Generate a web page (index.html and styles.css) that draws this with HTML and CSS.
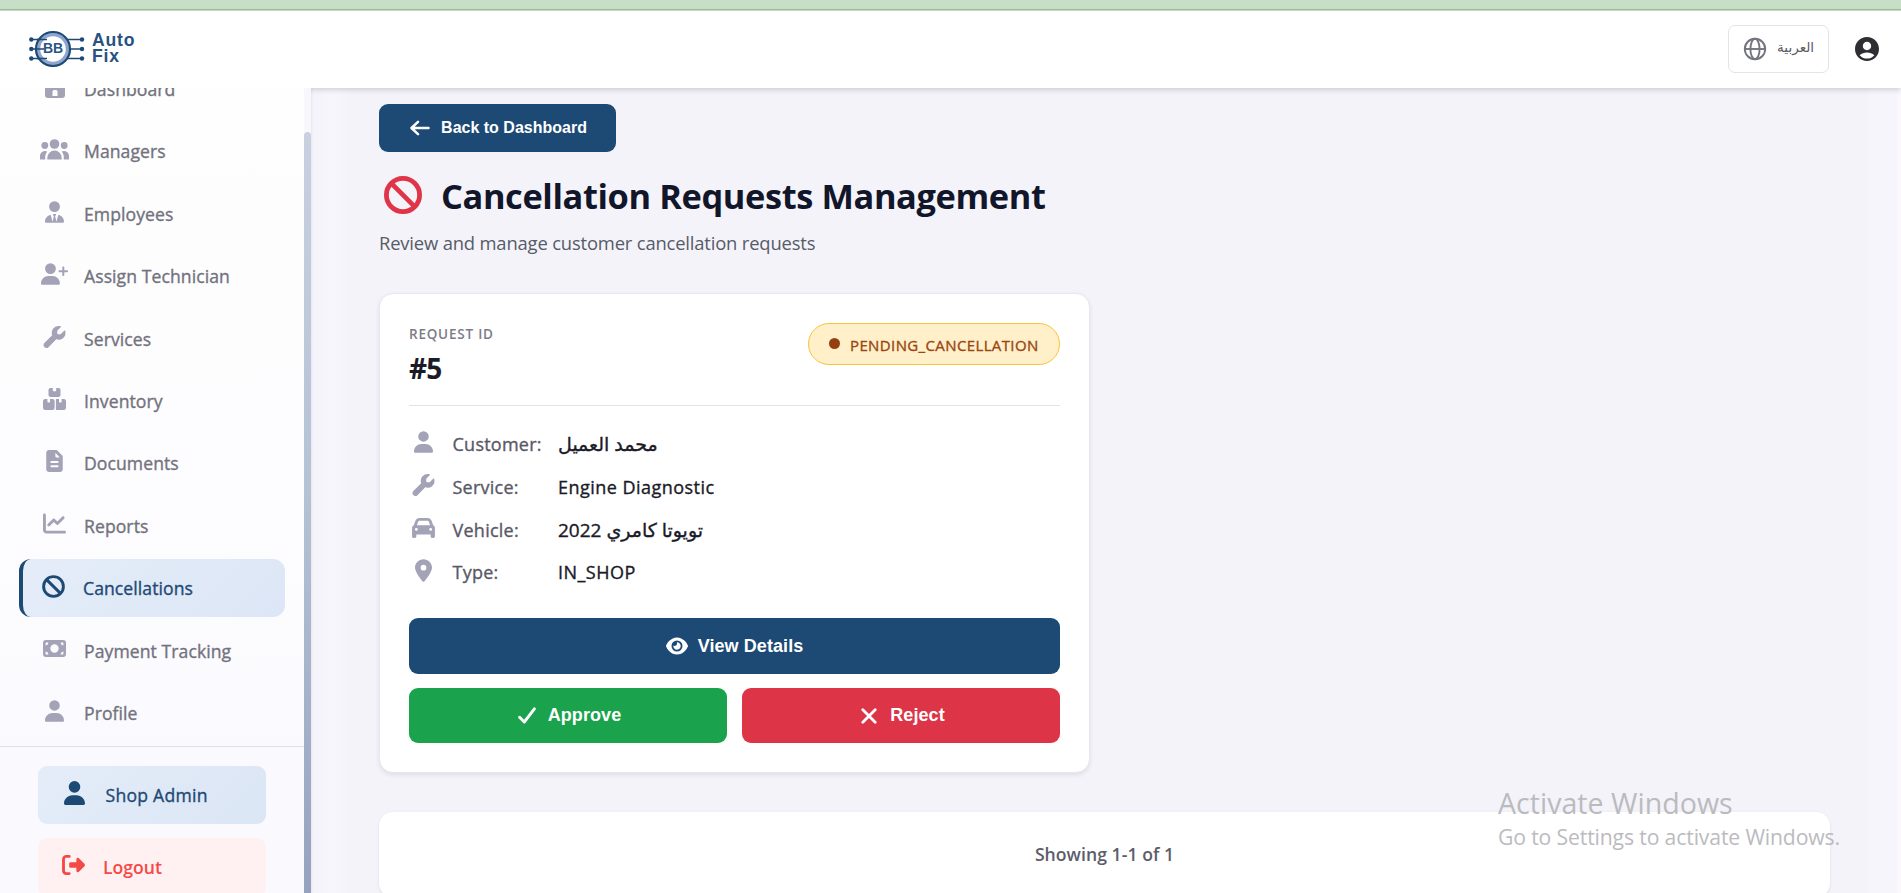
FILE: index.html
```html
<!DOCTYPE html>
<html lang="en">
<head>
<meta charset="utf-8">
<title>Cancellation Requests Management</title>
<link rel="stylesheet" href="styles.css">
</head>
<body>
<div class="strip"></div>
<header class="topbar">
  <div class="brand">
    <svg class="brand-mark" viewBox="0 0 56 38" width="56" height="38">
      <g stroke="#1d4975" stroke-width="1.7" fill="#1d4975">
        <path d="M2 9.500H11M2 19H14M2 28.500H11M38 9.500H53M42 19H53M38 28.500H53"/>
        <g stroke="none"><circle cx="2.300" cy="9.500" r="2.200"/><circle cx="2.300" cy="19" r="2.200"/><circle cx="2.300" cy="28.500" r="2.200"/><circle cx="53" cy="9.500" r="2.200"/><circle cx="53" cy="19" r="2.200"/><circle cx="53" cy="28.500" r="2.200"/></g>
      </g>
      <circle cx="24" cy="19" r="14.500" fill="#fff" stroke="#8ea6cf" stroke-width="3.400"/>
      <circle cx="24" cy="19" r="17" fill="none" stroke="#1d4975" stroke-width="2.200"/>
      <path d="M6 19H15M8 9.500H18M8 28.500H18" stroke="#1d4975" stroke-width="1.500"/>
      <text x="24" y="23.200" class="brand-bb" text-anchor="middle">BB</text>
    </svg>
    <div class="brand-name"><span>Auto</span><span>Fix</span></div>
  </div>
  <div class="top-actions">
    <div class="lang">
      <svg viewBox="0 0 24 24" width="24" height="24" fill="none" stroke="#74747f" stroke-width="1.900"><circle cx="12" cy="12" r="10.200"/><ellipse cx="12" cy="12" rx="4.600" ry="10.200"/><path d="M1.800 12H22.200"/></svg>
      <span lang="ar" dir="rtl">العربية</span>
    </div>
    <svg viewBox="2 2 20 20" width="24" height="24" fill="#2e2e33"><path d="M12 2C6.480 2 2 6.480 2 12s4.480 10 10 10 10-4.480 10-10S17.520 2 12 2zm0 4c1.930 0 3.500 1.570 3.500 3.500S13.930 13 12 13s-3.500-1.570-3.500-3.500S10.070 6 12 6zm0 14c-2.030 0-4.430-.820-6.140-2.880C7.550 15.800 9.680 15 12 15s4.450.800 6.140 2.120C16.430 19.180 14.030 20 12 20z"/></svg>
  </div>
</header>
<div class="shell">
  <aside class="sidebar">
    <div class="side-scroll">
      <nav class="nav">
        <a class="item"><span class="ico"><svg viewBox="0 0 20 22" width="20" height="22"><path fill-rule="evenodd" d="M10 0L20 8V19a3 3 0 0 1-3 3H3a3 3 0 0 1-3-3V8zM7.500 20h5v-4.500a1.500 1.500 0 0 0-1.500-1.500h-2a1.500 1.500 0 0 0-1.500 1.500z"/></svg></span>Dashboard</a>
        <a class="item"><span class="ico"><svg viewBox="0 0 29 21" width="29" height="21"><circle cx="14.500" cy="5" r="4.800"/><circle cx="4.800" cy="6.500" r="3.400"/><circle cx="24.200" cy="6.500" r="3.400"/><path d="M7.300 20.600v-1.800a7.200 7.200 0 0 1 14.400 0v1.800zM0 20.600V17a5 5 0 0 1 7.300-4.400A10 10 0 0 0 5.300 20.600zM29 20.600V17a5 5 0 0 0-7.300-4.400A10 10 0 0 1 23.700 20.600z"/></svg></span>Managers</a>
        <a class="item"><span class="ico"><svg viewBox="0 0 448 512" width="19" height="22"><path d="M96 128a128 128 0 1 0 256 0A128 128 0 1 0 96 128zm94.500 200.200l18.600 31L175.800 483.100l-36-146.900c-2-8.100-9.800-13.400-17.900-11.300C51.900 342.400 0 405.800 0 481.300c0 17 13.800 30.700 30.700 30.700H162.500H417.300c17 0 30.700-13.800 30.700-30.700c0-75.500-51.900-138.900-121.900-156.400c-8.100-2-15.900 3.300-17.900 11.300l-36 146.900L238.900 359.200l18.600-31c6.400-10.700-1.300-24.200-13.700-24.200H204.300c-12.400 0-20.100 13.600-13.700 24.200z"/></svg></span>Employees</a>
        <a class="item"><span class="ico"><svg viewBox="0 0 640 512" width="27" height="22"><path d="M96 128a128 128 0 1 1 256 0A128 128 0 1 1 96 128zM0 482.300C0 383.800 79.800 304 178.300 304h91.400C368.200 304 448 383.800 448 482.300c0 16.400-13.300 29.700-29.700 29.700H29.700C13.300 512 0 498.700 0 482.300zM504 278V214H440c-13.300 0-24-10.700-24-24s10.700-24 24-24h64V102c0-13.300 10.700-24 24-24s24 10.700 24 24v64h64c13.300 0 24 10.700 24 24s-10.700 24-24 24H552v64c0 13.300-10.700 24-24 24s-24-10.700-24-24z"/></svg></span>Assign Technician</a>
        <a class="item"><span class="ico"><svg viewBox="0 0 512 512" width="23" height="22"><path d="M352 320c88.400 0 160-71.600 160-160c0-15.300-2.200-30.100-6.200-44.200c-3.100-10.800-16.400-13.200-24.300-5.300l-76.800 76.800c-3 3-7.100 4.700-11.300 4.700H336c-8.800 0-16-7.200-16-16V118.600c0-4.200 1.700-8.300 4.700-11.300l76.800-76.800c7.900-7.900 5.400-21.200-5.300-24.300C382.100 2.200 367.300 0 352 0C263.600 0 192 71.600 192 160c0 19.100 3.400 37.500 9.500 54.500L19.900 396.100C7.200 408.800 0 426.100 0 444.100C0 481.600 30.400 512 67.900 512c18 0 35.300-7.200 48-19.900L297.500 310.500c17 6.200 35.400 9.500 54.500 9.500z"/></svg></span>Services</a>
        <a class="item"><span class="ico"><svg viewBox="0 0 23 22" width="23" height="22"><path d="M7.500 0H9.800V2.600a.6.600 0 0 0 .6.600H12.600a.6.600 0 0 0 .6-.6V0H15.500a2 2 0 0 1 2 2V7a2 2 0 0 1-2 2H7.500a2 2 0 0 1-2-2V2a2 2 0 0 1 2-2zM2.200 11H4.400V13.800a.7.700 0 0 0 .7.700H6.300a.7.700 0 0 0 .7-.7V11H9.600a2 2 0 0 1 2 2V20a2 2 0 0 1-2 2H2.200a2.200 2.200 0 0 1-2.200-2.200V13.200A2.200 2.200 0 0 1 2.200 11zM12.900 11H16V13.800a.7.700 0 0 0 .7.700H17.900a.7.700 0 0 0 .7-.7V11H20.800A2.200 2.200 0 0 1 23 13.200V19.800A2.200 2.200 0 0 1 20.800 22H12.900z"/></svg></span>Inventory</a>
        <a class="item"><span class="ico"><svg viewBox="0 0 384 512" width="17" height="22"><path fill-rule="evenodd" d="M64 0C28.700 0 0 28.700 0 64V448c0 35.300 28.700 64 64 64H320c35.300 0 64-28.700 64-64V140L244 0zM212 65L315 172H236c-13 0-24-11-24-24zM120 256H264a24 24 0 0 1 0 48H120a24 24 0 0 1 0-48zm0 96H264a24 24 0 0 1 0 48H120a24 24 0 0 1 0-48z"/></svg></span>Documents</a>
        <a class="item"><span class="ico"><svg viewBox="0 0 512 512" width="23" height="23"><path d="M64 64c0-17.700-14.300-32-32-32S0 46.300 0 64V400c0 44.200 35.800 80 80 80H480c17.700 0 32-14.300 32-32s-14.300-32-32-32H80c-8.800 0-16-7.200-16-16V64zm406.600 86.600c12.500-12.500 12.500-32.800 0-45.300s-32.800-12.500-45.300 0L320 210.700l-57.400-57.400c-12.500-12.500-32.800-12.500-45.300 0l-112 112c-12.500 12.500-12.500 32.800 0 45.300s32.800 12.500 45.300 0L240 221.300l57.400 57.400c12.500 12.500 32.800 12.500 45.300 0l128-128z"/></svg></span>Reports</a>
        <a class="item active"><span class="ico"><svg viewBox="0 0 23 23" width="23" height="23" fill="none" stroke="#1d4975" stroke-width="2.900"><circle cx="11.500" cy="11.500" r="9.900"/><path d="M4.600 4.600L18.400 18.400"/></svg></span>Cancellations</a>
        <a class="item"><span class="ico"><svg viewBox="0 0 23 17" width="23" height="17"><path fill-rule="evenodd" d="M3 0H20a3 3 0 0 1 3 3V14a3 3 0 0 1-3 3H3a3 3 0 0 1-3-3V3a3 3 0 0 1 3-3zM11.500 4.300a4.200 4.200 0 1 0 0 8.400 4.200 4.200 0 0 0 0-8.400zM2.600 3.100V5.600A3 3 0 0 0 5.400 3.100a.5.500 0 0 0-.5-.5H3.100a.5.500 0 0 0-.5.5zM20.400 3.100V5.600A3 3 0 0 1 17.600 3.100a.5.500 0 0 1 .5-.5H19.900a.5.500 0 0 1 .5.500zM2.600 13.900V11.400A3 3 0 0 1 5.400 13.900a.5.500 0 0 1-.5.500H3.100a.5.500 0 0 1-.5-.5zM20.400 13.900V11.400A3 3 0 0 0 17.600 13.900a.5.500 0 0 0 .5.500H19.900a.5.500 0 0 0 .5-.5z"/></svg></span>Payment Tracking</a>
        <a class="item"><span class="ico"><svg viewBox="0 0 448 512" width="19" height="22"><path d="M224 248A124 124 0 1 0 224 0a124 124 0 1 0 0 248zM178.300 304C79.800 304 0 383.800 0 482.300C0 498.700 13.300 512 29.700 512H418.300c16.400 0 29.700-13.300 29.700-29.700C448 383.800 368.200 304 269.700 304z"/></svg></span>Profile</a>
      </nav>
      <div class="side-foot">
        <a class="foot-btn admin"><span class="ico"><svg viewBox="0 0 448 512" width="21" height="24"><path d="M224 248A124 124 0 1 0 224 0a124 124 0 1 0 0 248zM178.300 304C79.800 304 0 383.800 0 482.300C0 498.700 13.300 512 29.700 512H418.300c16.400 0 29.700-13.300 29.700-29.700C448 383.800 368.200 304 269.700 304z"/></svg></span>Shop Admin</a>
        <a class="foot-btn logout"><span class="ico"><svg viewBox="0 0 512 448" width="23" height="20"><path d="M377.900 73.900L500.700 196.700c7.200 7.200 11.300 17.100 11.300 27.300s-4.100 20.100-11.300 27.300L377.900 374.100c-6.400 6.400-15 9.900-24 9.900c-18.700 0-33.900-15.200-33.900-33.900l0-62.100-128 0c-17.700 0-32-14.300-32-32l0-64c0-17.700 14.300-32 32-32l128 0 0-62.100c0-18.700 15.200-33.900 33.900-33.900c9 0 17.600 3.600 24 9.900zM160 64L96 64c-17.700 0-32 14.300-32 32l0 256c0 17.700 14.300 32 32 32l64 0c17.700 0 32 14.300 32 32s-14.300 32-32 32l-64 0c-53 0-96-43-96-96L0 96C0 43 43 0 96 0l64 0c17.700 0 32 14.300 32 32s-14.300 32-32 32z"/></svg></span>Logout</a>
      </div>
    </div>
    <div class="track"><div class="thumb"></div></div>
  </aside>
  <main class="main">
    <div class="page">
      <button class="btn back"><svg viewBox="0 0 20 16" width="20" height="16" fill="none" stroke="#fff" stroke-width="2.500" stroke-linecap="round" stroke-linejoin="round"><path d="M8 1.800L1.500 8L8 14.200M2 8H18.500"/></svg>Back to Dashboard</button>
      <h1 class="title"><svg viewBox="0 0 38 38" width="38" height="38" fill="none" stroke="#e03448" stroke-width="4.800"><circle cx="19" cy="19" r="16.600"/><path d="M7.400 7.400L30.600 30.600"/></svg><span>Cancellation Requests Management</span></h1>
      <p class="subtitle">Review and manage customer cancellation requests</p>
      <section class="card">
        <div class="card-head">
          <div>
            <div class="req-label">REQUEST ID</div>
            <div class="req-id">#5</div>
          </div>
          <div class="badge"><i class="dot"></i><span>PENDING_CANCELLATION</span></div>
        </div>
        <div class="rows">
          <div class="row"><span class="rico"><svg viewBox="0 0 448 512" width="19" height="22"><path d="M224 248A124 124 0 1 0 224 0a124 124 0 1 0 0 248zM178.300 304C79.800 304 0 383.800 0 482.300C0 498.700 13.300 512 29.700 512H418.300c16.400 0 29.700-13.300 29.700-29.700C448 383.800 368.200 304 269.700 304z"/></svg></span><span class="k">Customer:</span><span class="v ar">محمد العميل</span></div>
          <div class="row"><span class="rico"><svg viewBox="0 0 512 512" width="23" height="22"><path d="M352 320c88.400 0 160-71.600 160-160c0-15.300-2.200-30.100-6.200-44.200c-3.100-10.800-16.400-13.200-24.300-5.300l-76.800 76.800c-3 3-7.100 4.700-11.300 4.700H336c-8.800 0-16-7.200-16-16V118.600c0-4.200 1.700-8.300 4.700-11.300l76.800-76.800c7.900-7.900 5.400-21.200-5.300-24.300C382.100 2.200 367.300 0 352 0C263.600 0 192 71.600 192 160c0 19.100 3.400 37.500 9.500 54.500L19.900 396.100C7.200 408.800 0 426.100 0 444.100C0 481.600 30.400 512 67.900 512c18 0 35.300-7.200 48-19.900L297.500 310.500c17 6.200 35.400 9.500 54.500 9.500z"/></svg></span><span class="k">Service:</span><span class="v">Engine Diagnostic</span></div>
          <div class="row"><span class="rico"><svg viewBox="0 32 512 448" width="23" height="20"><path d="M135.200 117.400L109.100 192H402.900l-26.100-74.600C372.300 104.600 360.200 96 346.600 96H165.400c-13.600 0-25.700 8.600-30.200 21.400zM39.600 196.800L74.800 96.300C88.300 57.800 124.600 32 165.400 32H346.600c40.800 0 77.100 25.800 90.600 64.300l35.200 100.500c23.200 9.600 39.600 32.500 39.600 59.200V448c0 17.700-14.300 32-32 32H448c-17.700 0-32-14.300-32-32V400H96v48c0 17.700-14.300 32-32 32H32c-17.700 0-32-14.300-32-32V256c0-26.700 16.400-49.600 39.600-59.200zM128 288a32 32 0 1 0 -64 0 32 32 0 1 0 64 0zm288 32a32 32 0 1 0 0-64 32 32 0 1 0 0 64z"/></svg></span><span class="k">Vehicle:</span><span class="v ar" dir="rtl">تويوتا كامري 2022</span></div>
          <div class="row"><span class="rico"><svg viewBox="0 0 384 512" width="17" height="23"><path d="M215.700 499.200C267 435 384 279.400 384 192C384 86 298 0 192 0S0 86 0 192c0 87.400 117 243 168.300 307.200c12.300 15.300 35.100 15.300 47.400 0zM192 128a64 64 0 1 1 0 128 64 64 0 1 1 0-128z"/></svg></span><span class="k">Type:</span><span class="v">IN_SHOP</span></div>
        </div>
        <div class="actions">
          <button class="btn view"><svg viewBox="0 32 576 448" width="22" height="18" fill="#fff"><path d="M288 32c-80.800 0-145.500 36.800-192.600 80.600C48.600 156 17.300 208 2.500 243.700c-3.300 7.900-3.300 16.700 0 24.600C17.300 304 48.600 356 95.400 399.400C142.500 443.200 207.200 480 288 480s145.500-36.800 192.600-80.600c46.800-43.500 78.100-95.400 93-131.100c3.300-7.900 3.300-16.700 0-24.600c-14.900-35.700-46.200-87.700-93-131.100C433.500 68.800 368.800 32 288 32zM144 256a144 144 0 1 1 288 0 144 144 0 1 1 -288 0zm144-64c0 35.300-28.700 64-64 64c-7.100 0-13.900-1.200-20.300-3.300c-5.500-1.800-11.900 1.600-11.700 7.400c.3 6.900 1.300 13.800 3.200 20.700c13.700 51.200 66.400 81.600 117.600 67.900s81.600-66.400 67.900-117.600c-11.100-41.500-47.800-69.400-88.600-71.100c-5.800-.2-9.200 6.100-7.400 11.700c2.100 6.400 3.300 13.200 3.300 20.300z"/></svg>View Details</button>
          <button class="btn approve"><svg viewBox="0 0 18 17" width="18" height="17" fill="none" stroke="#fff" stroke-width="2.900" stroke-linecap="round" stroke-linejoin="round"><path d="M1.600 10.200L6.300 15L16.400 1.800"/></svg>Approve</button>
          <button class="btn reject"><svg viewBox="0 0 16 16" width="16" height="16" fill="none" stroke="#fff" stroke-width="2.800" stroke-linecap="round"><path d="M1.800 1.800L14.200 14.200M14.200 1.800L1.800 14.200"/></svg>Reject</button>
        </div>
      </section>
      <section class="pager">Showing 1-1 of 1</section>
    </div>
  </main>
</div>
<div class="watermark"><div class="wm-a">Activate Windows</div><div class="wm-b">Go to Settings to activate Windows.</div></div>
</body>
</html>
```
FILE: styles.css
```css
* { box-sizing: border-box; }
body { margin: 0; height: 893px; overflow: hidden; display: flex; flex-direction: column; font-family: "Open Sans", "DejaVu Sans", sans-serif; background: #f4f3f9; }
svg { display: block; flex: none; }
.strip { height: 11px; flex: none; background: linear-gradient(#c6dfc6 0 9px, #9dbd9e 9px 10px, #c6dfc6 10px); }
.topbar { height: 77px; flex: none; position: relative; z-index: 2; background: #fff; box-shadow: 0 2px 5px rgba(60, 60, 70, .2); display: flex; justify-content: space-between; padding: 0 22px 2px 29px; align-items: center; }
.brand { display: flex; align-items: center; gap: 7px; }
.brand-bb { font: 700 14px "Liberation Sans", sans-serif; fill: #2a5583; }
.brand-name { display: flex; flex-direction: column; font: 700 17.600px/15.500px "Liberation Sans", sans-serif; color: #28527f; letter-spacing: .8px; }
.top-actions { display: flex; align-items: center; gap: 26px; }
.lang { width: 101px; height: 48px; border: 1px solid #e4e4e8; border-radius: 7px; display: flex; align-items: center; gap: 10px; padding: 0 0 0 14px; }
.lang span { font: 13.600px/20px "DejaVu Sans", sans-serif; color: #5a5a64; margin-top: -3px; }

.shell { flex: 1; min-height: 0; display: flex; }
.sidebar { width: 311px; flex: none; display: flex; position: relative; z-index: 3; background: linear-gradient(#fefefe, #fdfcfe 50%, #f9f9fe); box-shadow: 1px 0 2px rgba(60, 60, 90, .08); clip-path: inset(0 -4px 0 0); }
.side-scroll { width: 304px; overflow: hidden; }
.nav { margin-top: -28px; padding: 0 19px; display: flex; flex-direction: column; gap: 4.400px; }
.item { height: 58px; flex: none; display: flex; align-items: center; padding-left: 20px; font-size: 17.600px; -webkit-text-stroke: .35px currentColor; letter-spacing: .07px; color: #72727d; border-radius: 12px; }
.ico { width: 31px; margin-right: 14px; margin-top: -4px; display: flex; justify-content: center; }
.item svg, .rico svg { fill: #a3a2b7; }
.item.active { border-left: 4px solid #1d4975; background: linear-gradient(135deg, #e4edf8, #dce6f6); color: #1d4975; padding-left: 15px; }
.item.active svg { fill: none; }
.side-foot { border-top: 1px solid #e1e1ea; margin-top: 4px; padding: 19px 38px 0; display: flex; flex-direction: column; gap: 14px; }
.foot-btn { height: 58px; flex: none; border-radius: 9px; display: flex; align-items: center; font-size: 17.600px; }
.admin { background: linear-gradient(135deg, #e4ecf9, #dbe6f4); color: #1d4975; -webkit-text-stroke: .35px currentColor; letter-spacing: .25px; padding-left: 21px; }
.admin .ico { margin-right: 15.500px; }
.admin svg { fill: #1d4975; }
.logout { background: #fff0f2; color: #f44a46; font-weight: 600; letter-spacing: 0; padding-left: 20px; }
.logout svg { fill: #f44a46; }
.track { width: 7px; padding-top: 44px; background: #f8f7fc; }
.thumb { height: 800px; border-radius: 4px 4px 0 0; background: linear-gradient(#c9d0df, #b4c2d5 45%, #95a2be 96%); }

.main { flex: 1; min-width: 0; padding: 0 33px 0 34px; background: linear-gradient(90deg, #f5f3fa 0, #f7f6fc 22px, #f4f3f9 40px, #f4f3f9 1557px, #f6f5fb 1558px, #f6f5fb 1586px, #faf8fd 1587px); }
.page { padding: 16px 38px 0 34px; }
.btn { border: 0; border-radius: 9px; color: #fff; font-family: "Liberation Sans", sans-serif; font-weight: 700; display: flex; align-items: center; justify-content: center; padding: 0; }
.back { width: 237px; height: 48px; background: #1d4975; font-size: 16px; gap: 11px; padding-left: 2px; }
.title { margin: 24px 0 0 4px; height: 40px; display: flex; align-items: center; gap: 20px; font-size: 34.400px; line-height: 40px; font-weight: 700; letter-spacing: -.39px; color: #12162a; white-space: nowrap; }
.title svg { margin: -2px -1px 0 1px; }
.subtitle { margin: 13px 0 0; font-size: 18.400px; line-height: 28px; letter-spacing: -.17px; color: #565b68; }
.card { width: 711px; height: 480px; margin-top: 36px; padding: 29px; border: 1px solid #e8e7ef; border-radius: 14px; background: #fff; box-shadow: 0 2px 4px rgba(50, 50, 80, .1); }
.card-head { height: 83px; border-bottom: 1px solid #e3e3e8; display: flex; justify-content: space-between; align-items: flex-start; }
.req-label { margin-top: 1px; font-size: 13.500px; line-height: 20px; font-weight: 600; letter-spacing: .78px; color: #7c7c87; }
.req-id { margin-top: 6px; font-size: 28px; line-height: 36px; font-weight: 700; letter-spacing: -.9px; color: #1a1a28; }
.badge { height: 42px; width: 252px; border: 1px solid #f7c53c; border-radius: 21px; background: #fff0c9; display: flex; align-items: center; gap: 10px; padding-left: 20px; color: #9a4513; font-size: 15px; line-height: 20px; -webkit-text-stroke: .35px currentColor; letter-spacing: .38px; }
.badge span { margin-top: 2px; }
.dot { width: 11px; height: 11px; border-radius: 50%; background: #953f10; margin-top: -2px; }
.rows { margin-top: 17px; }
.row { height: 42.700px; display: flex; align-items: center; font-size: 18px; -webkit-text-stroke: .35px currentColor; line-height: 26px; }
.rico { width: 29px; margin: -4px 14.500px 0 0; display: flex; justify-content: center; }
.k { width: 105.500px; color: #595966; letter-spacing: .25px; }
.v { color: #1a1a28; letter-spacing: .47px; }
.v.ar { font-size: 19px; letter-spacing: 0; }
.actions { margin-top: 24.400px; display: grid; grid-template-columns: 1fr 1fr; gap: 14px 15px; grid-template-rows: 56px 55px; }
.actions .btn { font-size: 18px; letter-spacing: .07px; }
.view { grid-column: span 2; background: #1d4975; gap: 10px; }
.approve { background: #1aa24c; gap: 12px; padding-left: 3px; }
.reject { background: #dd3447; gap: 13px; padding-left: 4px; }
.pager { margin-top: 39px; height: 85px; border-radius: 14px; background: #fff; box-shadow: 0 1px 3px rgba(50, 50, 80, .1); text-align: center; font-size: 17.600px; line-height: 84px; font-weight: 600; letter-spacing: .05px; color: #5d5d6a; }

/* Desktop overlay drawn above the browser content */
.watermark { position: absolute; z-index: 9; left: 1498px; top: 784px; color: #bbbbbf; white-space: nowrap; }
.wm-a { font-size: 28.600px; line-height: 38px; letter-spacing: 0; }
.wm-b { font-size: 21.200px; line-height: 30px; letter-spacing: -.15px; }
```
